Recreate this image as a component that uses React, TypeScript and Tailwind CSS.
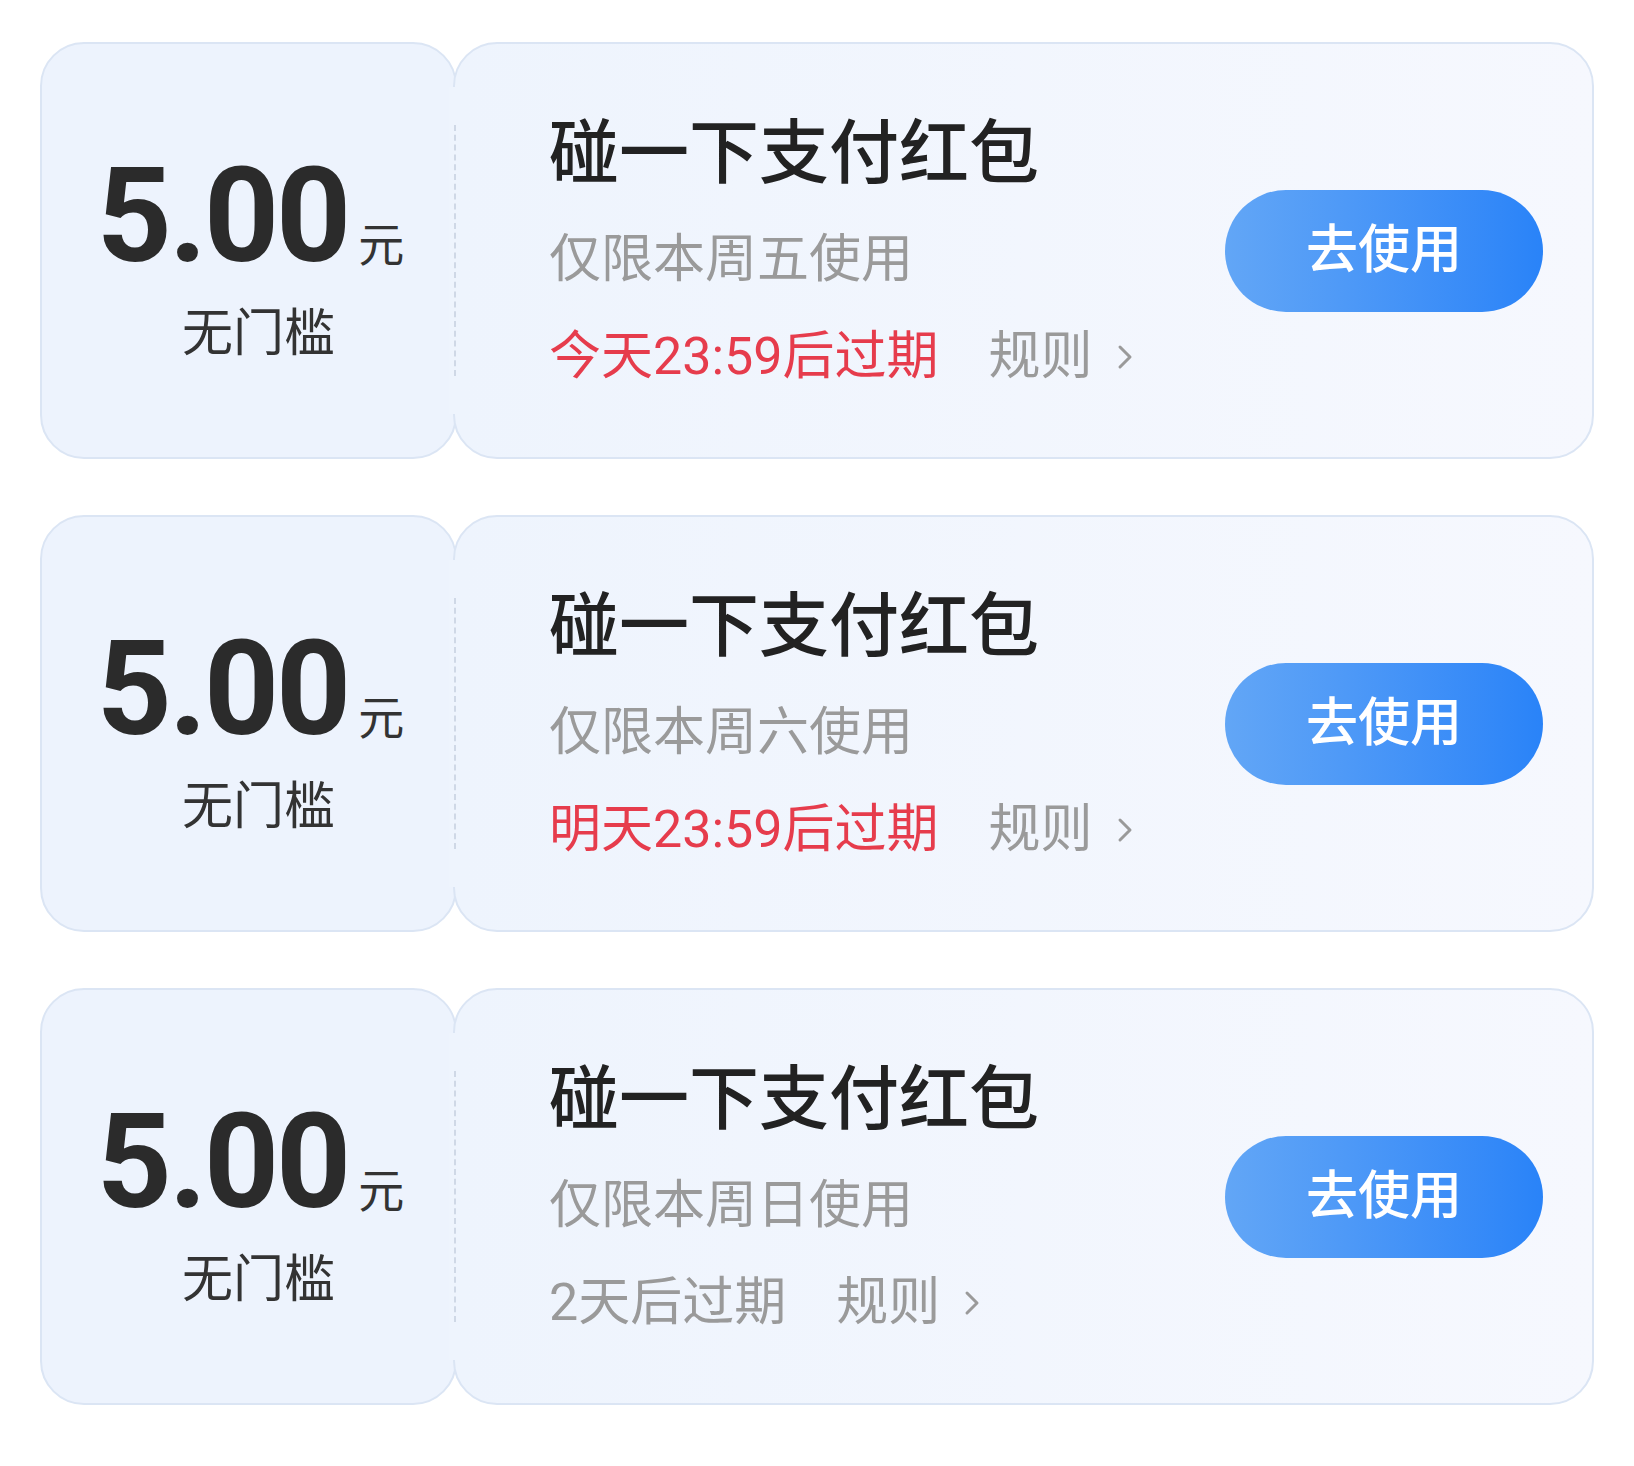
const coupons = [
  { limit: '仅限本周五使用', expire: '今天23:59后过期', urgent: true },
  { limit: '仅限本周六使用', expire: '明天23:59后过期', urgent: true },
  { limit: '仅限本周日使用', expire: '2天后过期', urgent: false },
]

function Coupon({ limit, expire, urgent }: { limit: string; expire: string; urgent: boolean }) {
  return (
    <div className="relative flex h-[417px]">
      {/* stub */}
      <div className="flex w-[417px] shrink-0 flex-col items-center justify-center rounded-[44px] border-2 border-[#dbe5f4] bg-[#edf3fd] pt-[8px]">
        <div className="flex items-baseline pl-[4px]">
          <span className="text-[131px] font-bold leading-none tracking-[-3px] text-[#2b2b2b]">5.00</span>
          <span className="ml-[10px] text-[46px] leading-none text-[#333]">元</span>
        </div>
        <div className="mt-[26px] pl-[20px] text-[51px] leading-none text-[#333]">无门槛</div>
      </div>

      {/* body */}
      <div className="-ml-[4px] flex flex-1 items-center rounded-[44px] border-2 border-[#dbe5f4] bg-linear-to-r from-[#eef4fd] to-[#f6f8fe] pl-[94px] pr-[49px]">
        <div className="flex flex-1 flex-col">
          <div className="text-[70px] font-medium leading-none text-[#222]">碰一下支付红包</div>
          <div className="mt-[45px] text-[52px] leading-none text-[#9a9a9a]">{limit}</div>
          <div className="mt-[45px] flex items-center text-[52px] leading-none">
            <span className={urgent ? 'text-[#e63c4c]' : 'text-[#9a9a9a]'}>{expire}</span>
            <span className="ml-[50px] text-[#9a9a9a]">规则</span>
            <svg className="ml-[24px]" width="16" height="28" viewBox="0 0 16 28" fill="none">
              <polyline points="3,4 13,14 3,24" stroke="#9a9a9a" strokeWidth="3" strokeLinecap="round" strokeLinejoin="round" />
            </svg>
          </div>
        </div>
        <button className="flex h-[122px] w-[318px] items-center justify-center rounded-full bg-linear-to-r from-[#62a6f6] to-[#2983f8] text-[52px] font-medium leading-none text-white">
          去使用
        </button>
      </div>

      {/* seam between stub and body */}
      <div className="absolute left-[409px] top-[45px] bottom-[45px] w-[12px] bg-[#eef4fd]" />
      <div className="absolute left-[414px] top-[83px] bottom-[83px] border-l-2 border-dashed border-[#cfd8e6]" />
    </div>
  )
}

export default function App() {
  return (
    <div className="flex min-h-screen flex-col gap-[56px] bg-white pl-[40px] pr-[40px] pt-[42px] [font-family:Roboto,'Noto_Sans_CJK_SC',sans-serif]">
      {coupons.map((c, i) => (
        <Coupon key={i} {...c} />
      ))}
    </div>
  )
}
